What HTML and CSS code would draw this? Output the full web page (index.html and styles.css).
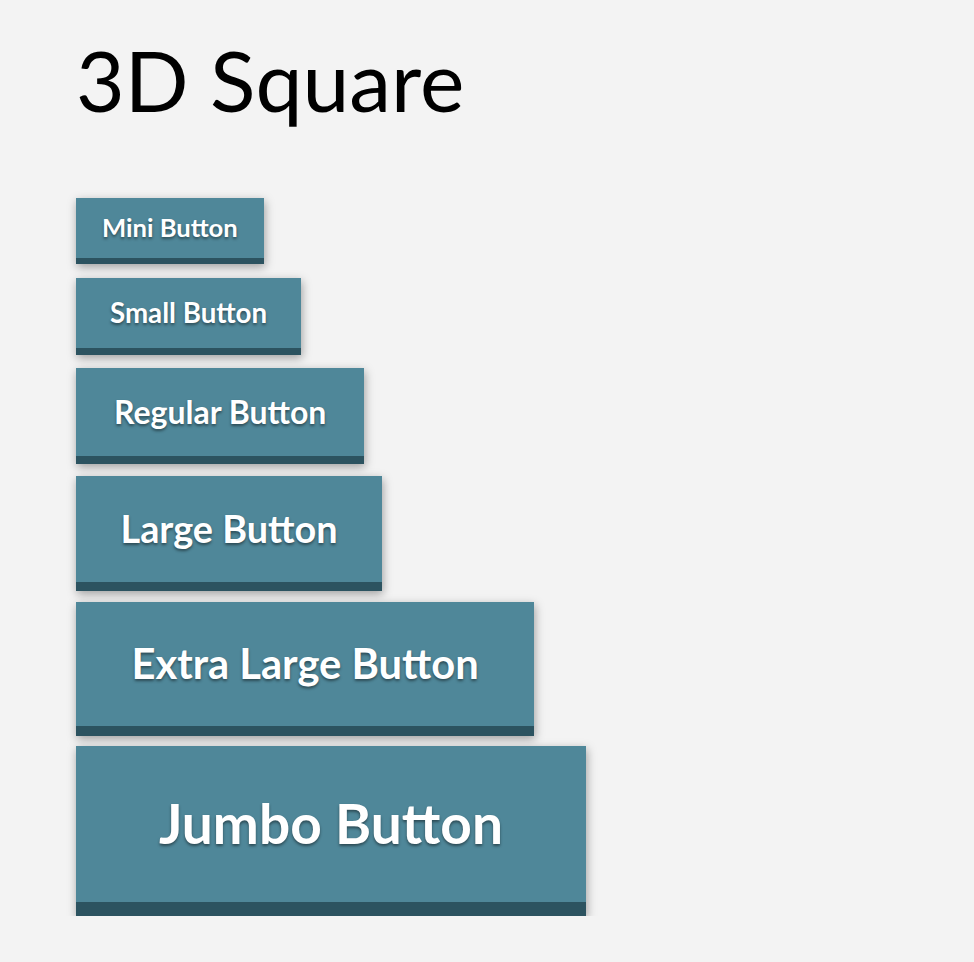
FILE: index.html
```html
<!DOCTYPE html>
<html lang="en">
<head>
<meta charset="UTF-8">
<meta name="viewport" content="width=device-width, initial-scale=1.0">
<title>3D Square Buttons</title>
<link rel="stylesheet" href="styles.css">
</head>
<body>

<div class="page">
    <h1 class="title">3D Square</h1>

    <div class="button-stack">
        <button class="btn-3d mini">Mini Button</button>
        <button class="btn-3d small">Small Button</button>
        <button class="btn-3d regular">Regular Button</button>
        <button class="btn-3d large">Large Button</button>
        <button class="btn-3d xlarge">Extra Large Button</button>
        <button class="btn-3d jumbo">Jumbo Button</button>
    </div>
</div>

</body>
</html>
```

FILE: styles.css
```css
body {
    margin: 0;
    background-color: #f3f3f3;
    font-family: Lato, "Open Sans", sans-serif;
}

.page {
    padding: 30px 0 0 76px;
}

.title {
    margin: 0 0 67px 0;
    font-size: 84px;
    font-weight: 400;
    line-height: 1.2;
    color: #000;
}

.button-stack {
    display: flex;
    flex-direction: column;
    align-items: flex-start;
}

/* flat face with a darker strip along the bottom edge */
.btn-3d {
    font-family: Lato, "Open Sans", sans-serif;
    font-weight: 700;
    line-height: 1;
    color: #fff;
    background-color: #4f8799;
    border: none;
    border-bottom: 6px solid #2c5360;
    border-radius: 0;
    box-shadow: 1px 3px 9px rgba(0, 0, 0, 0.35);
    text-shadow: 0 2px 3px rgba(0, 0, 0, 0.45);
    cursor: pointer;
}

.mini {
    font-size: 25.6px;
    padding: 17.2px 26px;
    margin-bottom: 14px;
}

.small {
    font-size: 27.7px;
    padding: 21.5px 34px;
    margin-bottom: 13px;
    border-bottom-width: 7px;
}

.regular {
    font-size: 32px;
    padding: 28px 38px;
    margin-bottom: 12px;
    border-bottom-width: 8px;
}

.large {
    font-size: 37.8px;
    padding: 34px 44.5px;
    margin-bottom: 11px;
    border-bottom-width: 9px;
}

.xlarge {
    font-size: 41.7px;
    padding: 41px 55.5px;
    margin-bottom: 10px;
    border-bottom-width: 10px;
}

.jumbo {
    font-size: 55px;
    padding: 50.5px 83px;
    border-bottom-width: 14px;
}
```
